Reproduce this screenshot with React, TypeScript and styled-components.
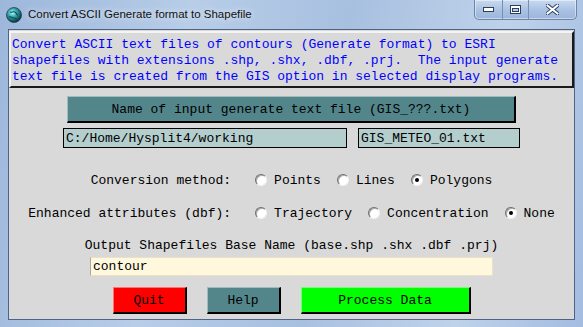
import styled, { createGlobalStyle } from 'styled-components';

const GlobalStyle = createGlobalStyle`
  html, body {
    margin: 0;
    padding: 0;
    width: 583px;
    height: 327px;
    overflow: hidden;
    background: #8aa6cc;
  }
`;

const mono = `'Liberation Mono', 'Courier New', monospace`;

const Window = styled.div`
  width: 583px;
  height: 327px;
  display: flex;
  flex-direction: column;
  background: linear-gradient(100deg, #9db7db 0%, #b7cde8 30%, #a8c0e0 55%, #bed2ea 80%, #a3bce0 100%);
  box-sizing: border-box;
`;

const TitleBar = styled.div`
  height: 29px;
  display: flex;
  align-items: flex-start;
  padding-left: 6px;
  flex-shrink: 0;
`;

const AppIcon = styled.svg`
  margin-top: 7px;
  width: 16px;
  height: 16px;
`;

const Title = styled.div`
  margin-top: 6px;
  margin-left: 6px;
  font-family: 'Liberation Sans', Arial, sans-serif;
  font-size: 11.5px;
  line-height: 17px;
  color: #111;
  text-shadow: 0 0 6px rgba(255, 255, 255, 0.9);
`;

const Controls = styled.div`
  margin-left: auto;
  margin-right: 6px;
  height: 19px;
  display: flex;
  border: 1px solid #6d84a6;
  border-top: none;
  border-radius: 0 0 5px 5px;
  overflow: hidden;
  background: linear-gradient(#c9daf0, #a9c1e2 55%, #9cb6da);
  box-shadow: inset 0 0 0 1px rgba(255, 255, 255, 0.45);
`;

const CtrlButton = styled.div<{ $w: number; $last?: boolean }>`
  width: ${(p) => p.$w}px;
  display: flex;
  align-items: center;
  justify-content: center;
  border-right: ${(p) => (p.$last ? 'none' : '1px solid #7890b2')};
`;

const Frame = styled.div`
  flex: 1;
  display: flex;
  padding: 0 8px 7px 8px;
`;

const Client = styled.div`
  flex: 1;
  background: #d9d9d9;
  border: 1px solid #4f6384;
  display: flex;
  flex-direction: column;
  align-items: center;
`;

const DescBox = styled.div`
  align-self: stretch;
  margin-top: 1px;
  border-style: solid;
  border-width: 2px;
  border-color: #f4f4f4 #1a1a1a #1a1a1a #f4f4f4;
  padding: 4px 1px 1px 1px;
  font-family: ${mono};
  font-size: 13px;
  line-height: 16px;
  color: #0000ff;
  white-space: pre;
  overflow: hidden;
`;

const TkButton = styled.div<{ $bg: string; $w: number }>`
  box-sizing: border-box;
  width: ${(p) => p.$w}px;
  height: 27px;
  background: ${(p) => p.$bg};
  border-style: solid;
  border-width: 1px 2px 2px 1px;
  border-color: rgba(255, 255, 255, 0.45) #000 #000 rgba(255, 255, 255, 0.45);
  display: flex;
  align-items: center;
  justify-content: center;
  font-family: ${mono};
  font-size: 13px;
  color: #000;
  white-space: pre;
`;

const EntryRow = styled.div`
  margin-top: 5px;
  display: flex;
  gap: 11px;
`;

const Entry = styled.div<{ $w: number; $bg: string; $outlined?: boolean }>`
  box-sizing: border-box;
  width: ${(p) => p.$w}px;
  height: ${(p) => (p.$outlined ? 20 : 19)}px;
  background: ${(p) => p.$bg};
  border: 1px solid ${(p) => (p.$outlined ? '#000' : '#e9e2c8')};
  border-left-color: ${(p) => (p.$outlined ? '#000' : '#a8a8a8')};
  padding-left: 2px;
  display: flex;
  align-items: center;
  font-family: ${mono};
  font-size: 13px;
  color: #000;
  white-space: pre;
`;

const RadioRow = styled.div<{ $mt: number }>`
  margin-top: ${(p) => p.$mt}px;
  height: 20px;
  display: flex;
  align-items: center;
  font-family: ${mono};
  font-size: 13px;
  color: #000;
  white-space: pre;
`;

const RowLabel = styled.span`
  margin-right: 24px;
`;

const RadioItem = styled.label`
  display: flex;
  align-items: center;
  gap: 7px;
  margin-right: 16px;
  &:last-child {
    margin-right: 0;
  }
`;

const RadioCircle = styled.span<{ $on?: boolean }>`
  box-sizing: border-box;
  width: 12px;
  height: 12px;
  border-radius: 50%;
  background: #fff;
  border: 1px solid;
  border-color: #6e6e6e #f2f2f2 #f2f2f2 #6e6e6e;
  box-shadow: inset 1px 1px 0 #a9a9a9;
  display: flex;
  align-items: center;
  justify-content: center;
  &::after {
    content: '';
    display: ${(p) => (p.$on ? 'block' : 'none')};
    width: 4px;
    height: 4px;
    border-radius: 50%;
    background: #000;
  }
`;

const OutputLabel = styled.div`
  margin-top: 15px;
  font-family: ${mono};
  font-size: 13px;
  line-height: 16px;
  color: #000;
  white-space: pre;
`;

const ButtonRow = styled.div`
  margin-top: 11px;
  display: flex;
  gap: 20px;
`;

type RadioGroupProps = { label: string; options: string[]; selected: string; mt: number };

const RadioGroup = ({ label, options, selected, mt }: RadioGroupProps) => (
  <RadioRow $mt={mt}>
    <RowLabel>{label}</RowLabel>
    {options.map((o) => (
      <RadioItem key={o}>
        <RadioCircle $on={o === selected} />
        {o}
      </RadioItem>
    ))}
  </RadioRow>
);

const App = () => {
  return (
    <>
      <GlobalStyle />
      <Window>
        <TitleBar>
          <AppIcon viewBox="0 0 16 16">
            <defs>
              <radialGradient id="globe" cx="40%" cy="35%" r="65%">
                <stop offset="0%" stopColor="#bff6f6" />
                <stop offset="45%" stopColor="#2fa7b0" />
                <stop offset="100%" stopColor="#0b2f3a" />
              </radialGradient>
            </defs>
            <circle cx="8" cy="8" r="7.5" fill="url(#globe)" stroke="#23404a" strokeWidth="0.8" />
            <path d="M4 5c2 1 3-1 5 0s1 3 3 3M3 10c2-1 3 1 5 1s2 2 3 1" stroke="#0e4a52" strokeWidth="1.2" fill="none" />
          </AppIcon>
          <Title>Convert ASCII Generate format to Shapefile</Title>
          <Controls>
            <CtrlButton $w={27}>
              <svg width="11" height="5" viewBox="0 0 11 5">
                <rect x="0.5" y="0.5" width="10" height="4" fill="#fff" stroke="#2b3f5e" />
              </svg>
            </CtrlButton>
            <CtrlButton $w={25}>
              <svg width="11" height="9" viewBox="0 0 11 9">
                <rect x="0.5" y="0.5" width="10" height="8" fill="#fff" stroke="#2b3f5e" />
                <rect x="2.5" y="3.5" width="6" height="3" fill="#b8cbe6" stroke="#2b3f5e" />
              </svg>
            </CtrlButton>
            <CtrlButton $w={47} $last>
              <svg width="13" height="11" viewBox="0 0 13 11">
                <path d="M1.5 1.5 L11.5 9.5 M11.5 1.5 L1.5 9.5" stroke="#2b3f5e" strokeWidth="4" strokeLinecap="square" />
                <path d="M1.5 1.5 L11.5 9.5 M11.5 1.5 L1.5 9.5" stroke="#fff" strokeWidth="2" strokeLinecap="square" />
              </svg>
            </CtrlButton>
          </Controls>
        </TitleBar>
        <Frame>
          <Client>
            <DescBox>
              {'Convert ASCII text files of contours (Generate format) to ESRI\n'}
              {'shapefiles with extensions .shp, .shx, .dbf, .prj.  The input generate\n'}
              {'text file is created from the GIS option in selected display programs.'}
            </DescBox>
            <TkButton $bg="#53868b" $w={449} style={{ marginTop: 8 }}>
              Name of input generate text file (GIS_???.txt)
            </TkButton>
            <EntryRow>
              <Entry $w={284} $bg="#b4cdcd" $outlined>
                C:/Home/Hysplit4/working
              </Entry>
              <Entry $w={162} $bg="#b4cdcd" $outlined>
                GIS_METEO_01.txt
              </Entry>
            </EntryRow>
            <RadioGroup
              mt={22}
              label="Conversion method:"
              options={['Points', 'Lines', 'Polygons']}
              selected="Polygons"
            />
            <RadioGroup
              mt={13}
              label="Enhanced attributes (dbf):"
              options={['Trajectory', 'Concentration', 'None']}
              selected="None"
            />
            <OutputLabel>Output Shapefiles Base Name (base.shp .shx .dbf .prj)</OutputLabel>
            <Entry $w={403} $bg="#fff8dc" style={{ marginTop: 3 }}>
              contour
            </Entry>
            <ButtonRow>
              <TkButton $bg="#ff0000" $w={74}>Quit</TkButton>
              <TkButton $bg="#53868b" $w={74}>Help</TkButton>
              <TkButton $bg="#00ff00" $w={170}>Process Data</TkButton>
            </ButtonRow>
          </Client>
        </Frame>
      </Window>
    </>
  );
};

export default App;
